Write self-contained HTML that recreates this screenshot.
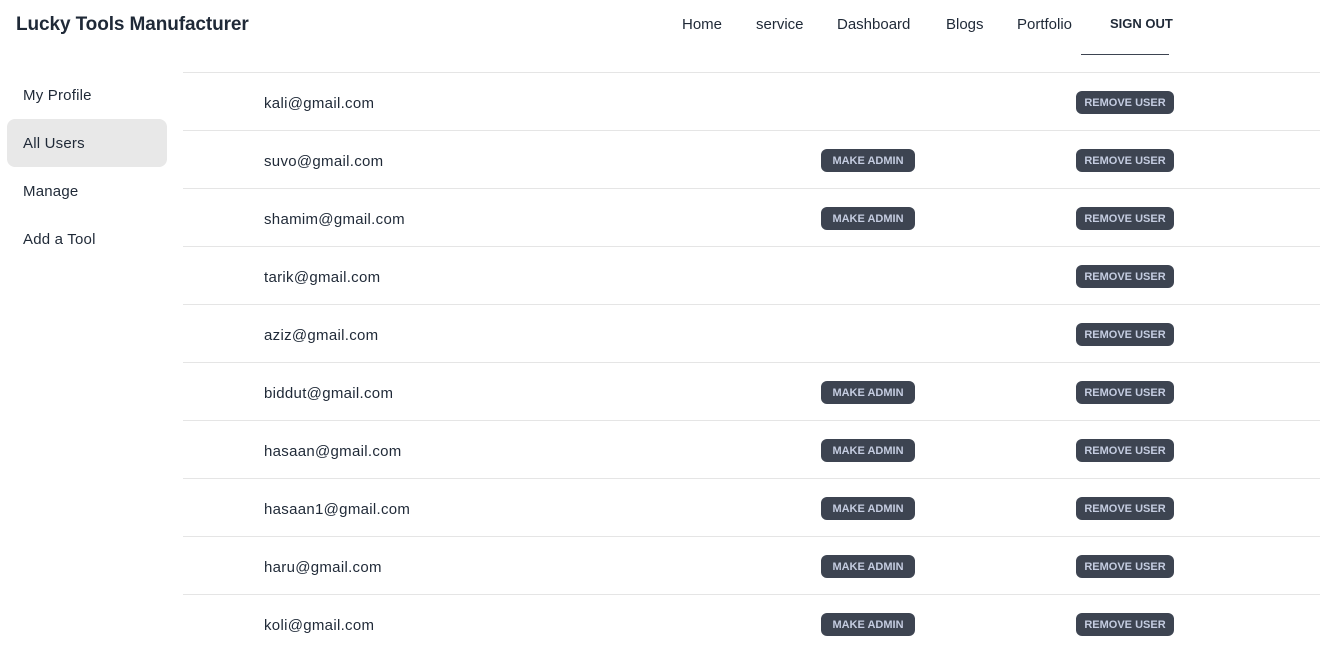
<!DOCTYPE html>
<html><head><style>
body{margin:0;width:1320px;height:639px;overflow:hidden;background:#fff;font-family:"Liberation Sans",sans-serif;color:#1f2937}
.logo{position:absolute;left:16px;top:14px;font-size:19px;font-weight:bold;color:#1f2937;letter-spacing:-0.1px}
.nav{position:absolute;top:16px;font-size:15px;color:#1f2937}
.side{position:absolute;left:7px;width:160px;height:48px;border-radius:8px;font-size:15px;line-height:50px;padding-left:16px;box-sizing:border-box;letter-spacing:0.2px}
.row{position:absolute;left:183px;width:1137px;height:58px;border-top:1px solid #e5e5e5}
.email{position:absolute;left:81px;top:22px;font-size:15px;letter-spacing:0.3px}
.btn{position:absolute;top:18px;height:23px;line-height:24px;background:#3d4451;color:#c4cce0;font-size:11px;font-weight:bold;border-radius:6px;text-align:center}
.ma{left:638px;width:94px}.ru{left:893px;width:98px}
</style></head><body>
<div class="logo">Lucky Tools Manufacturer</div>
<div class="nav" style="left:682px">Home</div>
<div class="nav" style="left:756px">service</div>
<div class="nav" style="left:837px">Dashboard</div>
<div class="nav" style="left:946px">Blogs</div>
<div class="nav" style="left:1017px">Portfolio</div>
<div class="nav" style="left:1110px;font-size:13px;font-weight:bold;top:16px">SIGN OUT</div>
<div style="position:absolute;left:1081px;top:54px;width:88px;height:1px;background:#3d4451"></div>
<div class="side" style="top:71px">My Profile</div>
<div class="side" style="top:119px;background:#e8e8e8">All Users</div>
<div class="side" style="top:167px">Manage</div>
<div class="side" style="top:215px">Add a Tool</div>

<div class="row" style="top:72px"><div class="email">kali@gmail.com</div><div class="btn ru">REMOVE USER</div></div>
<div class="row" style="top:130px"><div class="email">suvo@gmail.com</div><div class="btn ma">MAKE ADMIN</div><div class="btn ru">REMOVE USER</div></div>
<div class="row" style="top:188px"><div class="email">shamim@gmail.com</div><div class="btn ma">MAKE ADMIN</div><div class="btn ru">REMOVE USER</div></div>
<div class="row" style="top:246px"><div class="email">tarik@gmail.com</div><div class="btn ru">REMOVE USER</div></div>
<div class="row" style="top:304px"><div class="email">aziz@gmail.com</div><div class="btn ru">REMOVE USER</div></div>
<div class="row" style="top:362px"><div class="email">biddut@gmail.com</div><div class="btn ma">MAKE ADMIN</div><div class="btn ru">REMOVE USER</div></div>
<div class="row" style="top:420px"><div class="email">hasaan@gmail.com</div><div class="btn ma">MAKE ADMIN</div><div class="btn ru">REMOVE USER</div></div>
<div class="row" style="top:478px"><div class="email">hasaan1@gmail.com</div><div class="btn ma">MAKE ADMIN</div><div class="btn ru">REMOVE USER</div></div>
<div class="row" style="top:536px"><div class="email">haru@gmail.com</div><div class="btn ma">MAKE ADMIN</div><div class="btn ru">REMOVE USER</div></div>
<div class="row" style="top:594px"><div class="email">koli@gmail.com</div><div class="btn ma">MAKE ADMIN</div><div class="btn ru">REMOVE USER</div></div>
</body></html>
